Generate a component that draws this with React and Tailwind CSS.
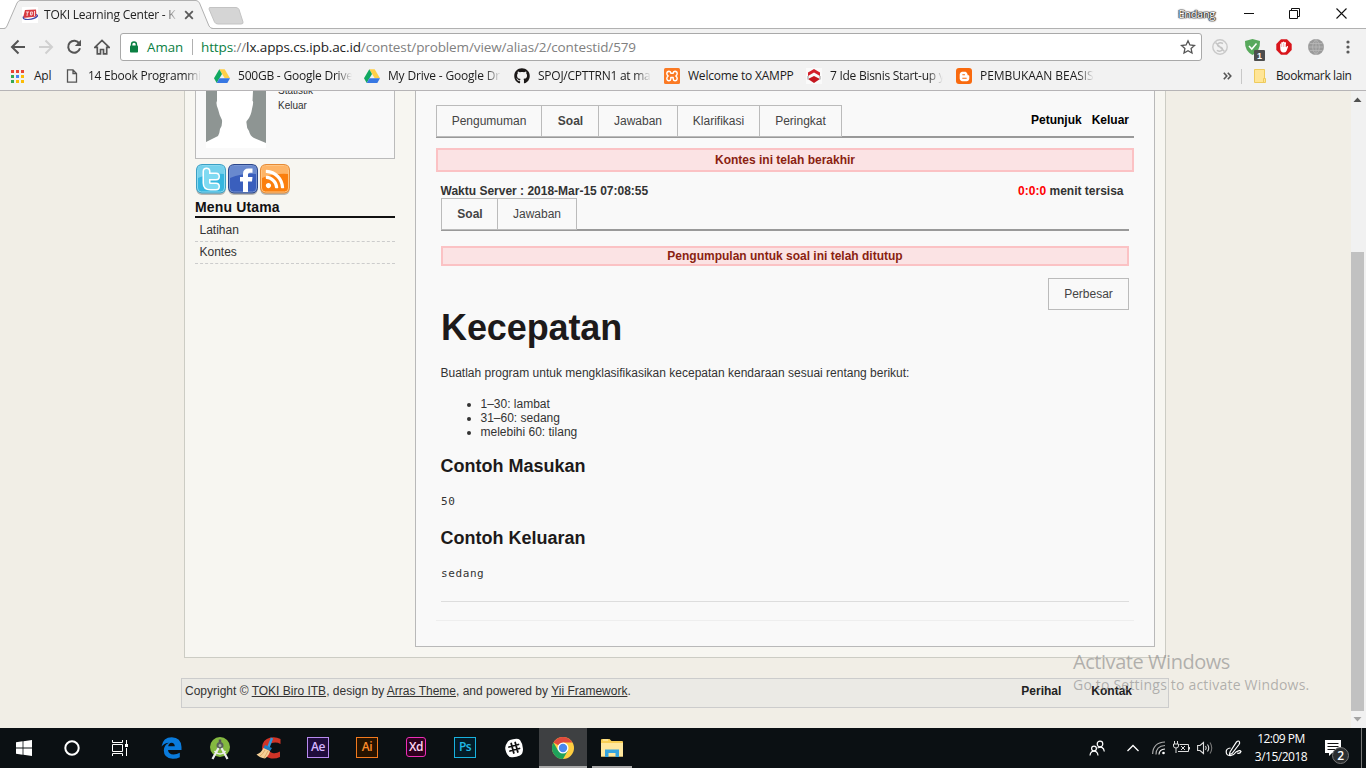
import React from "react";
import { FaGithub, FaRss, FaBloggerB } from "react-icons/fa";

const fade = "[mask-image:linear-gradient(to_right,black_86%,transparent)]";

function TitleBar() {
  return (
    <div className="relative flex h-[28px] shrink-0 bg-white">
      <svg className="absolute left-0 top-0" width="260" height="30" viewBox="0 0 260 30">
        <path d="M4 29 Q6 28.500 7 26 L17 3 Q18.500 .5 20 .5 H196 Q198 .5 199.500 3 L209 26 Q210.500 28.500 213 29 V30 H4Z" fill="#f2f2f2" />
        <path d="M0 28.500 H4 Q6 28.500 7 26 L17 3 Q18.500 .5 20 .5 H196 Q198 .5 199.500 3 L209 26 Q210.500 28.500 213 28.500 H260" fill="none" stroke="#b1b1b1" />
        <path d="M209.500 7.500 H236 Q238 7.500 239 9.500 L243 22 Q243.500 24 241 24 H218 Q215.500 24 214.500 22 L209 9Z" fill="#d5d5d5" stroke="#c3c3c3" />
      </svg>
      <div className="relative z-10 flex w-[200px] items-center pl-[22px] pt-[1px]">
        <svg width="16" height="16" viewBox="0 0 16 16">
          <rect width="16" height="16" fill="#fff" />
          <path d="M3 3 L14 2.500 L14.500 9.500 L1 11Z" fill="#d83a41" />
          <path d="M4 5 H7 M5.500 5 L5 9 M8.500 5 L10.500 5 L10 8 H8.500Z M12.500 4 L12.500 9" stroke="#f6d5d7" fill="none" />
          <path d="M1.500 9.500 Q0 12.500 6 12.500 Q13 12 15.500 9 Q15.500 7.800 14 7.500" fill="none" stroke="#4048a8" strokeWidth="1.200" />
        </svg>
        <div className="ml-[6px] w-[134px] overflow-hidden whitespace-nowrap text-[12px] tracking-[-0.22px] text-[#222] [mask-image:linear-gradient(to_right,black_90%,transparent_100%)]">
          TOKI Learning Center - K
        </div>
        <svg className="ml-[6px] shrink-0" width="10" height="10" viewBox="0 0 10 10"><path d="M1.200 1.200 L8.800 8.800 M8.800 1.200 L1.200 8.800" stroke="#5a5a5a" strokeWidth="1.800" /></svg>
      </div>
      <div className="ml-auto flex items-center">
        <span className="mr-[29px] text-[11px] leading-[16px] tracking-[-0.3px] text-white [text-shadow:0_0_1px_#222,0_0_1px_#222,0_0_2px_#333,1px_0_1px_#444,-1px_0_1px_#555]">Endang</span>
        <svg className="mr-[34px] -mt-[2px]" width="11" height="11" viewBox="0 0 11 11"><path d="M0 5.500 H10" stroke="#111" /></svg>
        <svg className="mr-[36px] -mt-[2px]" width="11" height="11" viewBox="0 0 11 11" fill="none" stroke="#111"><path d="M.5 2.500 H8.500 V10.500 H.5Z M2.500 2.500 V.5 H10.500 V8.500 H8.500" /></svg>
        <svg className="mr-[19px] -mt-[2px]" width="11" height="11" viewBox="0 0 11 11"><path d="M.5 .5 L10.500 10.500 M10.500 .5 L.5 10.500" stroke="#111" strokeWidth="1.100" /></svg>
      </div>
    </div>
  );
}

function Toolbar() {
  return (
    <div className="flex h-[38px] shrink-0 items-center border-t border-[#b1b1b1] bg-[#f2f2f2] pb-px">
      <div className="flex w-[120px] items-center gap-[12px] pl-[10px]">
        <svg width="16" height="16" viewBox="0 0 16 16" fill="none" stroke="#555" strokeWidth="2"><path d="M15 8 H2.500 M8.500 1.500 L2 8 L8.500 14.500" /></svg>
        <svg width="16" height="16" viewBox="0 0 16 16" fill="none" stroke="#d0d0d0" strokeWidth="2"><path d="M1 8 H13.500 M7.500 1.500 L14 8 L7.500 14.500" /></svg>
        <svg width="16" height="16" viewBox="0 0 16 16"><path d="M13.300 4.500 A6 6 0 1 0 14 9.300" fill="none" stroke="#555" strokeWidth="2" /><path d="M15 .8 V7 H8.800Z" fill="#555" /></svg>
        <svg width="16" height="16" viewBox="0 0 16 16" fill="none" stroke="#555" strokeWidth="1.700"><path d="M.8 8.400 H3.300 V14.800 H6.500 V10.500 H9.500 V14.800 H12.700 V8.400 H15.200 L8 1.500Z" /></svg>
      </div>
      <div className="flex h-[28px] w-[1082px] items-center rounded-[3px] border border-[#a9a9a9] bg-white">
        <svg className="ml-[8px]" width="10" height="12" viewBox="0 0 10 12"><rect x="1" y="4.500" width="8" height="7" rx=".8" fill="#0b8043" /><path d="M2.600 5 V3.300 A2.400 2.400 0 0 1 7.400 3.300 V5" fill="none" stroke="#0b8043" strokeWidth="1.500" /></svg>
        <span className="ml-[8px] w-[45px] text-[13.300px] leading-[18px] text-[#0b8043]">Aman</span>
        <span className="h-[16px] w-px bg-[#b0b0b0]" />
        <span className="ml-[8px] whitespace-nowrap text-[13.500px] leading-[18px] tracking-[-0.120px] text-[#808080]"><span className="text-[#0b8043]">https</span>://<span className="text-[#222]">lx.apps.cs.ipb.ac.id</span>/contest/problem/view/alias/2/contestid/579</span>
        <svg className="ml-auto mr-[5px]" width="16" height="16" viewBox="0 0 16 16" fill="none" stroke="#555" strokeWidth="1.300"><path d="M8 1.800 L9.900 6 L14.500 6.500 L11.100 9.600 L12 14 L8 11.700 L4 14 L4.900 9.600 L1.500 6.500 L6.100 6Z" /></svg>
      </div>
      <svg className="ml-[10px]" width="16" height="16" viewBox="0 0 16 16" fill="none"><circle cx="8" cy="8" r="7.200" stroke="#c9c9c9" strokeWidth="1.400" /><path d="M11 4.500 Q8 3 6 4.800 Q4.600 7 8 8 Q11.500 9 10 11.300 Q8 13 4.800 11.400 M3.500 3.500 L12.500 12.500" stroke="#c4c4c4" strokeWidth="1.500" /></svg>
      <svg className="ml-[15px] mt-[2px]" width="22" height="25" viewBox="0 0 22 25"><path d="M9.500 3 L17 5 Q17.500 15 9.500 19 Q1.500 15 2 5Z" fill="#58a95c" /><path d="M6 10 L8.800 13 L13.500 7.500" fill="none" stroke="#fff" strokeWidth="1.500" /><rect x="11" y="14" width="11" height="11" rx="1" fill="#4d4d4d" /><text x="14" y="23" fontSize="9" fill="#fff" fontFamily="Liberation Sans, sans-serif" fontWeight="700">1</text></svg>
      <svg className="ml-[11px]" width="16" height="16" viewBox="0 0 16 16"><path d="M5 .3 H11 L15.700 5 V11 L11 15.700 H5 L.3 11 V5Z" fill="#d9151b" /><path d="M4.200 8.500 V5 Q4.700 4 5.300 5 V3.500 Q6 2.300 6.800 3.500 V3 Q7.600 1.800 8.400 3 V3.500 Q9.300 2.500 10 3.800 V8.500 L11 7 Q12.300 6.500 12 8 L10.500 12 Q9.800 13.500 7.500 13.500 Q4.200 13.500 4.200 8.500Z" fill="#fff" /><path d="M5.700 5 V8 M7.600 4 V8 M9.300 5 V8" stroke="#e77b7e" strokeWidth=".5" /></svg>
      <svg className="ml-[16px]" width="16" height="16" viewBox="0 0 16 16" fill="none"><circle cx="8" cy="8" r="8" fill="#9a9a9a" /><path d="M0 8 H16 M1.500 4.500 H14.500 M1.500 11.500 H14.500 M8 0 V16 M8 0 Q1 8 8 16 M8 0 Q15 8 8 16" stroke="#b9b9b9" strokeWidth=".8" /></svg>
      <svg className="ml-[22px]" width="4" height="14" viewBox="0 0 4 14" fill="#5a5a5a"><circle cx="2" cy="2" r="1.600" /><circle cx="2" cy="7" r="1.600" /><circle cx="2" cy="12" r="1.600" /></svg>
    </div>
  );
}

function Drive() {
  return (
    <svg width="16" height="16" viewBox="0 0 16 16"><path d="M5.300 1.200 H10.700 L16 10.300 H10.700Z" fill="#ffcf48" /><path d="M5.300 1.200 L8 5.900 L2.700 15 L0 10.300Z" fill="#11a861" /><path d="M5.400 10.300 H16 L13.300 15 H2.700Z" fill="#3777e3" /></svg>
  );
}

function Mark({ icon, label, box }) {
  return (
    <div className={"flex shrink-0 items-center " + box}>
      <span className="flex w-[16px] shrink-0 justify-center">{icon}</span>
      <span className="ml-[8px] min-w-0 flex-1 overflow-hidden whitespace-nowrap">{label}</span>
    </div>
  );
}

const dotColors = ["#e94435", "#e94435", "#e94435", "#34a853", "#4285f4", "#fbbc05", "#34a853", "#fbbc05", "#fbbc05"];

function Bookmarks() {
  return (
    <div className="box-border flex h-[25px] shrink-0 items-center border-b border-[#b6b4b6] bg-[#f2f2f2] pb-[4px] pl-[10px] text-[12px] leading-[16px] tracking-[-0.25px] text-[#1c1c1c]">
      <div className="flex w-[54px] items-center">
        <svg className="ml-px mr-[10px]" width="13" height="13" viewBox="0 0 13 13">{dotColors.map((c, i) => <rect key={i} x={(i % 3) * 5} y={Math.floor(i / 3) * 5} width="3" height="3" fill={c} />)}</svg>
        Apl
      </div>
      <Mark box="w-[150px] pr-[13px]" icon={<svg width="12" height="14" viewBox="0 0 12 14" fill="none" stroke="#555" strokeWidth="1.300"><path d="M1.500 .8 H7 L10.500 4.500 V13.200 H1.500Z M7 .8 V4.500 H10.500" /></svg>} label={<span className={"block overflow-hidden " + fade}>14 Ebook Programmi</span>} />
      <Mark box="w-[150px] pr-[12px]" icon={<Drive />} label={<span className={"block overflow-hidden tracking-[-0.220px] " + fade}>500GB - Google Drive</span>} />
      <Mark box="w-[150px] pr-[13px]" icon={<Drive />} label={<span className={"block overflow-hidden tracking-[-0.180px] " + fade}>My Drive - Google Dr</span>} />
      <Mark box="w-[150px] pr-[13px]" icon={<FaGithub size={16} color="#1b1817" />} label={<span className={"block overflow-hidden " + fade}>SPOJ/CPTTRN1 at ma</span>} />
      <Mark box="w-[142px]" icon={<svg width="16" height="16" viewBox="0 0 16 16"><rect width="16" height="16" rx="1.500" fill="#fb7a24" /><path d="M4.200 8 Q2.800 7 2.800 5.500 Q3 3.300 5 3.300 Q6.800 3.400 6.800 5.300 H9.200 Q9.200 3.400 11 3.300 Q13 3.300 13.200 5.500 Q13.200 7 11.800 8 Q13.200 9 13.200 10.500 Q13 12.700 11 12.700 Q9.200 12.600 9.200 10.700 V9.500 H6.800 V10.700 Q6.800 12.600 5 12.700 Q3 12.700 2.800 10.500 Q2.800 9 4.200 8Z" fill="none" stroke="#fff" strokeWidth="1.400" strokeLinejoin="round" /></svg>} label={<span className="tracking-[-0.220px]">Welcome to XAMPP</span>} />
      <Mark box="w-[150px] pr-[13px]" icon={<svg width="16" height="16" viewBox="0 0 16 16"><rect width="16" height="16" fill="#fafafa" /><path d="M2 4.500 L8 1 L14 4.500 V8 L8 4.500 L2 8Z" fill="#d31f2a" /><path d="M2 11 L8 8 L14 11 L8 15Z" fill="#c4161f" /><path d="M2 8 V11.500 M14 8 V11.500" stroke="#b9b9b9" strokeWidth="1.500" /></svg>} label={<span className={"block overflow-hidden tracking-[-0.270px] " + fade}>7 Ide Bisnis Start-up y</span>} />
      <Mark box="w-[150px] pr-[12px]" icon={<span className="flex size-[16px] items-center justify-center rounded-[3px] bg-[#f96a0e]"><FaBloggerB size={11} color="#fff" /></span>} label={<span className={"block overflow-hidden tracking-[-0.050px] " + fade}>PEMBUKAAN BEASISW</span>} />
      <svg className="ml-[117px] shrink-0" width="9" height="8" viewBox="0 0 9 8" fill="none" stroke="#555" strokeWidth="1.600"><path d="M.8 .8 L3.800 4 L.8 7.200 M4.800 .8 L7.800 4 L4.800 7.200" /></svg>
      <span className="ml-[9px] h-[15px] w-px bg-[#c8c8c8]" />
      <svg className="ml-[12px] shrink-0" width="12" height="14" viewBox="0 0 12 14"><path d="M.5 .5 H10.500 V9.500 H11.500 V13.500 H.5Z" fill="#ffe596" stroke="#eecb5d" /><path d="M9.500 13 V9.500 H11" stroke="#eecb5d" fill="none" /></svg>
      <span className="ml-[10px] whitespace-nowrap tracking-[-0.400px]">Bookmark lain</span>
    </div>
  );
}

function SocialIcon({ kind }) {
  const c = { t: ["#3a9fc4", "#8bdaf0", "#36b6df"], f: ["#2b4689", "#7a97d4", "#3a5fbd"], r: ["#e58a35", "#ffc684", "#fb7f0e"] }[kind];
  return (
    <svg width="32" height="33" viewBox="0 0 32 33">
      <rect x="1.500" y="2" width="29" height="30" rx="5" fill="#000" opacity=".25" />
      <rect x="1" y="1" width="30" height="29.500" rx="6" fill={c[0]} />
      <rect x="2.500" y="2.500" width="27" height="26.500" rx="4" fill={c[2]} stroke={c[1]} />
      <path d="M3 6 Q3 3 6 3 H26 Q29 3 29 6 V11 Q16 10 3 15Z" fill={c[1]} opacity=".75" />
      {kind === "t" && <><path d="M11.500 8.500 V20 Q11.500 23.500 15.500 23.500 H21 M11.500 13.500 H21" fill="none" stroke="#fff" strokeWidth="8" strokeLinecap="round" strokeLinejoin="round" /><path d="M11.500 8.500 V20 Q11.500 23.500 15.500 23.500 H21 M11.500 13.500 H21" fill="none" stroke="#7fdaf2" strokeWidth="5" strokeLinecap="round" /><path d="M17 18.500 H23" stroke="#36b6df" strokeWidth="1" /></>}
      {kind === "f" && <path d="M16 29 V18.500 H13 V14 H16 V11 Q16 5.500 21.500 5.500 H25.500 V9.700 H22.800 Q21 9.700 21 11.500 V14 H25.500 L25 18.500 H21 V29Z" fill="#fff" />}
      {kind === "r" && <svg x="5.500" y="5.500" width="21" height="21"><FaRss size={21} color="#fff" /></svg>}
    </svg>
  );
}

function Sidebar() {
  return (
    <div className="ml-[10px] w-[200px] shrink-0 text-[#333]">
      <div className="flex h-[68px] border border-t-0 border-[#bbb] bg-[#f9f9f9] pl-[10px]">
        <svg width="60" height="57" viewBox="0 0 60 57"><rect width="60" height="57" fill="#8e9593" /><path d="M11 0 H47 L46.500 10 Q48 10 46 18 Q45 25 41.500 29 Q40 30 40.500 32 Q40.500 37 43 40 Q44 45 48 47 L60 52 V57 H0 V51 L12 45 Q13.500 43 14 38 Q16.500 35 16 29 Q13.500 25 12 18 Q9.500 12 11 10Z" fill="#fff" /></svg>
        <div className="-mt-[8px] ml-[12px] text-[10px] leading-[15px]">
          <div>Statistik</div>
          <div>Keluar</div>
        </div>
      </div>
      <div className="mt-[4px] flex h-[33px]"><SocialIcon kind="t" /><SocialIcon kind="f" /><SocialIcon kind="r" /></div>
      <div className="mt-[3px] h-[19px] border-b-2 border-[#111] text-[14px] font-bold leading-[17px] tracking-[0.150px] text-[#111]">Menu Utama</div>
      <div className="h-[24px] border-b border-dashed border-[#ccc] pl-[4.500px] pt-[5px] leading-[14px]">Latihan</div>
      <div className="h-[22px] border-b border-dashed border-[#ccc] pl-[4.500px] pt-[3px] leading-[14px]">Kontes</div>
    </div>
  );
}

function Tab({ label, w, active, last }) {
  return (
    <div className={"-mb-px flex h-[32px] items-center justify-center border-y border-l border-[#bbb] text-[#444] " + w + (active ? " pl-px font-bold" : "") + (last ? " border-r" : "")}>{label}</div>
  );
}

function Content() {
  return (
    <div className="ml-[20px] flex h-[556px] w-[740px] shrink-0 flex-col border border-t-0 border-[#b9b9b9] bg-[#f9f9f9] px-[20px] pt-[14px] text-[#333]">
      <div className="flex h-[33px] shrink-0 border-b-2 border-[#999]">
        <Tab label="Pengumuman" w="w-[105px]" />
        <Tab label="Soal" w="w-[57px]" active />
        <Tab label="Jawaban" w="w-[79px]" />
        <Tab label="Klarifikasi" w="w-[82px]" />
        <Tab label="Peringkat" w="w-[83px]" last />
        <div className="ml-auto mr-[5px] mt-[8px] flex gap-[10px] font-bold leading-[14px] text-black"><span>Petunjuk</span><span>Keluar</span></div>
      </div>
      <div className="mt-[10px] h-[24px] shrink-0 border-2 border-[#fbc2c4] bg-[#fbe3e4] text-center font-bold leading-[20px] text-[#8a1f11]">Kontes ini telah berakhir</div>
      <div className="mt-[12px] flex h-[14px] shrink-0 justify-between pl-[4.500px] pr-[10.500px] font-bold leading-[14px]">
        <span>Waktu Server : 2018-Mar-15 07:08:55</span>
        <span><span className="text-[#f00]">0:0:0</span> menit tersisa</span>
      </div>
      <div className="mx-[5px] flex flex-col">
        <div className="flex h-[33px] border-b-2 border-[#999]">
          <Tab label="Soal" w="w-[56px]" active />
          <Tab label="Jawaban" w="w-[80px]" last />
        </div>
        <div className="mt-[15px] h-[20px] border-2 border-[#fbc2c4] bg-[#fbe3e4] text-center font-bold leading-[16px] text-[#8a1f11]">Pengumpulan untuk soal ini telah ditutup</div>
        <div className="mt-[12px] flex h-[32px] w-[81px] items-center justify-center self-end border border-[#bbb] text-[#444]">Perbesar</div>
        <h1 className="text-[36px] font-bold leading-[36px] tracking-[-0.100px] text-[#1d1a1a]">Kecepatan</h1>
        <p className="-ml-[0.500px] mt-[20px] leading-[14px]">Buatlah program untuk mengklasifikasikan kecepatan kendaraan sesuai rentang berikut:</p>
        <ul className="mt-[17px] list-disc pl-[39.500px] leading-[14px]">
          <li>1–30: lambat</li>
          <li>31–60: sedang</li>
          <li>melebihi 60: tilang</li>
        </ul>
        <h2 className="-ml-[0.500px] mt-[17px] text-[18px] font-bold leading-[20px] text-[#1d1a1a]">Contoh Masukan</h2>
        <pre className="mt-[19px] font-['DejaVu_Sans_Mono',monospace] text-[11px] leading-[14px] tracking-[0.600px]">50</pre>
        <h2 className="-ml-[0.500px] mt-[19px] text-[18px] font-bold leading-[20px] text-[#1d1a1a]">Contoh Keluaran</h2>
        <pre className="mt-[19px] font-['DejaVu_Sans_Mono',monospace] text-[11px] leading-[14px] tracking-[0.600px]">sedang</pre>
        <hr className="mt-[20px] h-px border-0 bg-[#ddd]" />
      </div>
      <hr className="mt-[18px] h-px border-0 bg-[#eee]" />
    </div>
  );
}

function Page() {
  return (
    <div className="flex h-[637px] shrink-0 overflow-hidden bg-[#f1eee6] font-['Liberation_Sans',Arial,sans-serif] text-[12px]">
      <div className="w-[1351px]">
        <div className="ml-[184px] flex h-[567px] w-[982px] border border-t-0 border-[#ccccc4] bg-[#f7f6f1]">
          <Sidebar />
          <Content />
        </div>
        <div className="ml-[181px] mt-[20px] flex h-[30px] w-[988px] border border-[#ccc] bg-[#ebeae5] pl-[3px] pr-[36px] pt-[5px] leading-[14px] text-[#333]">
          <span>Copyright © <span className="underline">TOKI Biro ITB</span>, design by <span className="underline">Arras Theme</span>, and powered by <span className="underline">Yii Framework</span>.</span>
          <span className="ml-auto flex gap-[30px] font-bold text-[#222]"><span>Perihal</span><span>Kontak</span></span>
        </div>
      </div>
      <div className="flex w-[15px] flex-col bg-[#f1f1f1]">
        <svg width="13" height="18" viewBox="0 0 13 18"><path d="M2.500 11 H10.500 L6.500 6.500Z" fill="#505050" /></svg>
        <div className="mt-[143px] h-[459px] w-[13px] bg-[#c1c1c1]" />
        <svg width="13" height="17" viewBox="0 0 13 17"><path d="M2.500 6 H10.500 L6.500 10.500Z" fill="#a3a3a3" /></svg>
      </div>
    </div>
  );
}

function Adobe({ text, box }) {
  return <div className={"mb-[2px] flex items-center justify-center font-semibold leading-none tracking-[-0.5px] " + box}>{text}</div>;
}

function Taskbar() {
  const cell = "flex h-[40px] w-[48px] items-center justify-center";
  return (
    <div className="flex h-[40px] shrink-0 bg-[#0b1013] text-white">
      <div className={cell}><svg width="16" height="16" viewBox="0 0 16 16" fill="#fff"><path d="M0 2.200 L6.600 1.300 V7.600 H0Z M7.400 1.200 L16 0 V7.600 H7.400Z M0 8.400 H6.600 V14.700 L0 13.800Z M7.400 8.400 H16 V16 L7.400 14.800Z" /></svg></div>
      <div className={cell}><svg width="16" height="16" viewBox="0 0 16 16"><circle cx="8" cy="8" r="6.700" fill="none" stroke="#fff" strokeWidth="2" /></svg></div>
      <div className={cell}><svg className="-mt-px" width="17" height="16" viewBox="0 0 17 16" fill="none" stroke="#fff"><path d="M.5 0 V2.500 H10.500 V0 M.5 4.500 H10.500 V11.500 H.5Z M.5 16 V13.500 H10.500 V16 M14.500 0 V4 M14.500 8 V16" /><rect x="13.500" y="4.500" width="2" height="2" fill="#fff" /></svg></div>
      <div className="ml-[3px] flex gap-px">
        <div className={cell}><svg width="21" height="22" viewBox="0 0 21 22"><path d="M.5 9.500 Q2 .3 10.800 .3 Q20 .5 20.500 10 V13 H7 Q7.500 17.300 12.500 17.500 Q16 17.500 18.800 15.800 V20.200 Q15.500 22 11.500 21.800 Q2.800 21 2.800 13.500 Q3 8 8 5.800 Q3.500 6 .5 9.500Z" fill="#0a7bdc" /><path d="M7.200 9.200 H13.800 Q13.500 5.800 10.600 5.700 Q7.800 6 7.200 9.200Z" fill="#0b1013" /></svg></div>
        <div className={cell}><svg width="22" height="24" viewBox="0 0 22 24"><circle cx="11" cy="11" r="10" fill="#84b940" /><path d="M11 3.500 V7" stroke="#555" strokeWidth="2.500" /><circle cx="11" cy="9.500" r="2.500" fill="#a8b8a0" stroke="#59605a" strokeWidth="2" /><path d="M9.500 12 L3.500 23 M12.500 12 L18.500 23" stroke="#eee" strokeWidth="2.200" /><path d="M5.500 15 Q11 21 16.500 15" fill="none" stroke="#eee" strokeWidth="1.500" /></svg></div>
        <div className={cell}><svg width="26" height="24" viewBox="0 0 26 24"><path d="M24.500 8 V3 Q20 .5 14.500 1.500 Q6 3.500 6 12 Q6.500 21 15 22.500 Q20 23 24 21 V15.500 Q20 18 16.500 17 Q12.500 15.500 12.500 12 Q13 7.500 17 6.800 Q21 6 24.500 8Z" fill="#cf3427" /><path d="M16 2 L12.500 11" stroke="#3098dc" strokeWidth="2.500" /><path d="M9 9 L16 12 L14 15 L7.500 12Z" fill="#1c7fc4" /><path d="M7.500 12 L14 15 Q13 20 9 22.500 Q4 22 .5 18.500 Q5 17 7.500 12Z" fill="#f5cf96" /><path d="M9 14 Q7 18 4 20 M12 15 Q10 19 8 22" stroke="#dda967" fill="none" /></svg></div>
        <div className={cell}><Adobe text="Ae" box="h-[21px] w-[22px] border border-[#b88af0] bg-[#1f0c3c] text-[12px] text-[#d6b5ff]" /></div>
        <div className={cell}><Adobe text="Ai" box="h-[21px] w-[22px] border border-[#f37a1e] bg-[#261300] text-[12px] text-[#ff8b2a]" /></div>
        <div className={cell}><Adobe text="Xd" box="h-[20px] w-[20px] rounded-[3px] border border-[#ed2fb7] bg-[#2e001e] text-[12px] text-[#ffd5f2]" /></div>
        <div className={cell}><Adobe text="Ps" box="h-[21px] w-[22px] border border-[#18b1de] bg-[#031c28] text-[12px] text-[#20b9e6]" /></div>
        <div className={cell}><svg width="20" height="20" viewBox="0 0 20 20"><path d="M3 5 Q4 2 9 1.200 Q14 0 16 2 Q19 6 19 11 Q19 16 16 17.500 Q11 20 6 19 Q2.500 17 1.500 12 Q.5 8 3 5Z" fill="#fff" /><path d="M7.200 5.500 L9.800 15 M11.200 4.500 L13.800 14 M5 9 L14.500 6.500 M6 13 L15.500 10.500" stroke="#111" strokeWidth="1.800" strokeLinecap="round" /></svg></div>
        <div className={cell + " border-b-2 border-[#a9a9a9] bg-[#3e4042]"}><svg className="mt-[2px]" width="22" height="22" viewBox="0 0 22 22"><circle cx="11" cy="11" r="11" fill="#ffcd40" /><path d="M11 11 L1.470 5.500 A11 11 0 0 1 20.500 5.500 H11Z" fill="#df4a3d" /><path d="M11 11 L6.200 13.700 L1.470 5.500 A11 11 0 0 0 11 22 L15.800 13.700Z" fill="#1fa25b" /><circle cx="11" cy="11" r="5.500" fill="#fff" /><circle cx="11" cy="11" r="4.200" fill="#4a88ef" /></svg></div>
        <div className={cell}><div className="flex h-[40px] w-[40px] items-center justify-center border-b-2 border-[#a9a9a9]"><svg className="mt-px" width="22" height="20" viewBox="0 0 22 20"><path d="M0 2 Q0 1 1 1 H8.500 L10.500 3 H21 Q22 3 22 4 V18.500 H0Z" fill="#f8ce55" /><path d="M0 5 H22 V18.500 H0Z" fill="#ffe79d" /><path d="M4 19 V11.500 H18 V19 H14.500 V15 H7.500 V19Z" fill="#36a4dd" /><path d="M2 2 H7" stroke="#fff3c6" /></svg></div></div>
      </div>
      <div className="ml-auto flex items-center">
        <svg width="16" height="16" viewBox="0 0 16 16" fill="none" stroke="#fff" strokeWidth="1.200"><circle cx="11" cy="4" r="2.800" /><circle cx="5" cy="8.500" r="2.400" /><path d="M1 15.500 Q1.500 11.200 5 11.200 Q8.500 11.200 9 15.500 M8.500 8 Q14.500 5.500 15.300 11.500" /></svg>
        <svg className="ml-[22px]" width="12" height="8" viewBox="0 0 12 8" fill="none" stroke="#fff" strokeWidth="1.300"><path d="M.5 7 L6 1.500 L11.500 7" /></svg>
        <svg className="ml-[13px]" width="14" height="14" viewBox="0 0 14 14" fill="none" stroke="#aaa" strokeWidth="1.200"><path d="M.6 13 Q1 1.500 13 1" /><path d="M4 13.500 Q4 5 13 4.500" /><path d="M7 13.500 Q7 8.500 13 8" stroke="#eee" /><circle cx="11.500" cy="12" r="1.300" fill="#fff" stroke="none" /></svg>
        <svg className="ml-[7px]" width="18" height="14" viewBox="0 0 18 14" fill="none" stroke="#ddd"><path d="M6.500 3.500 H15.500 V10.500 H5 M16.500 6 V8.500 M1.500 0 V3 M4.500 0 V3 M.5 3 H5.500 V5 Q5.500 7 3 7 Q.5 7 .5 5Z M3 7 V12 M8 5 L12 9 M12 5 L8 9" /></svg>
        <svg className="ml-[6px]" width="16" height="14" viewBox="0 0 16 14" fill="none" stroke="#ddd" strokeWidth="1.100"><path d="M.6 4.500 H3 L6.500 1.500 V12.500 L3 9.500 H.6Z M8.500 5 Q10 7 8.500 9 M10.500 3.500 Q13 7 10.500 10.500" /><path d="M13 1.500 Q16.500 7 13 12.500" stroke="#777" /></svg>
        <svg className="ml-[12px]" width="17" height="17" viewBox="0 0 17 17" fill="none" stroke="#fff" strokeWidth="1.200"><path d="M5 12 L11.500 2 Q13.500 0 14.500 2 Q15 3 14 4.500 L7 13.500 L4.500 14.500Z M5.500 8 Q1 8.500 1.200 12 Q1.300 16 6 15.500 Q9 15 11 12 Q15 9.500 16 11.500 Q15 14 12 13" /></svg>
        <div className="ml-[6px] w-[66px] whitespace-nowrap text-center text-[12px] leading-[18px] tracking-[-0.500px]"><div>12:09 PM</div><div>3/15/2018</div></div>
        <svg className="ml-[10px] mt-[7px]" width="26" height="26" viewBox="0 0 26 26"><path d="M1 1 H17 V14 H8 L5 17 V14 H1Z" fill="#fff" /><path d="M3.500 4.500 H14.500 M3.500 7.500 H14.500 M3.500 10.500 H11" stroke="#111" /><circle cx="16.500" cy="16.500" r="8" fill="#2b2e30" stroke="#777" /><text x="13.200" y="21" fontSize="12" fill="#fff" fontFamily="Open Sans, sans-serif" fontWeight="600">2</text></svg>
        <div className="ml-[11px] mr-[4px] h-[40px] w-px bg-[#777]" />
      </div>
    </div>
  );
}

export default function App() {
  return (
    <div className="relative flex h-[768px] w-[1366px] flex-col overflow-hidden font-['Open_Sans',sans-serif]">
      <TitleBar />
      <Toolbar />
      <Bookmarks />
      <Page />
      <Taskbar />
      <div className="pointer-events-none absolute left-[1073px] top-[649px] whitespace-nowrap text-[#858585]/60">
        <div className="text-[20px] leading-[26px] tracking-[-0.450px]">Activate Windows</div>
        <div className="text-[14px] leading-[20px] tracking-[0.200px]">Go to Settings to activate Windows.</div>
      </div>
    </div>
  );
}
